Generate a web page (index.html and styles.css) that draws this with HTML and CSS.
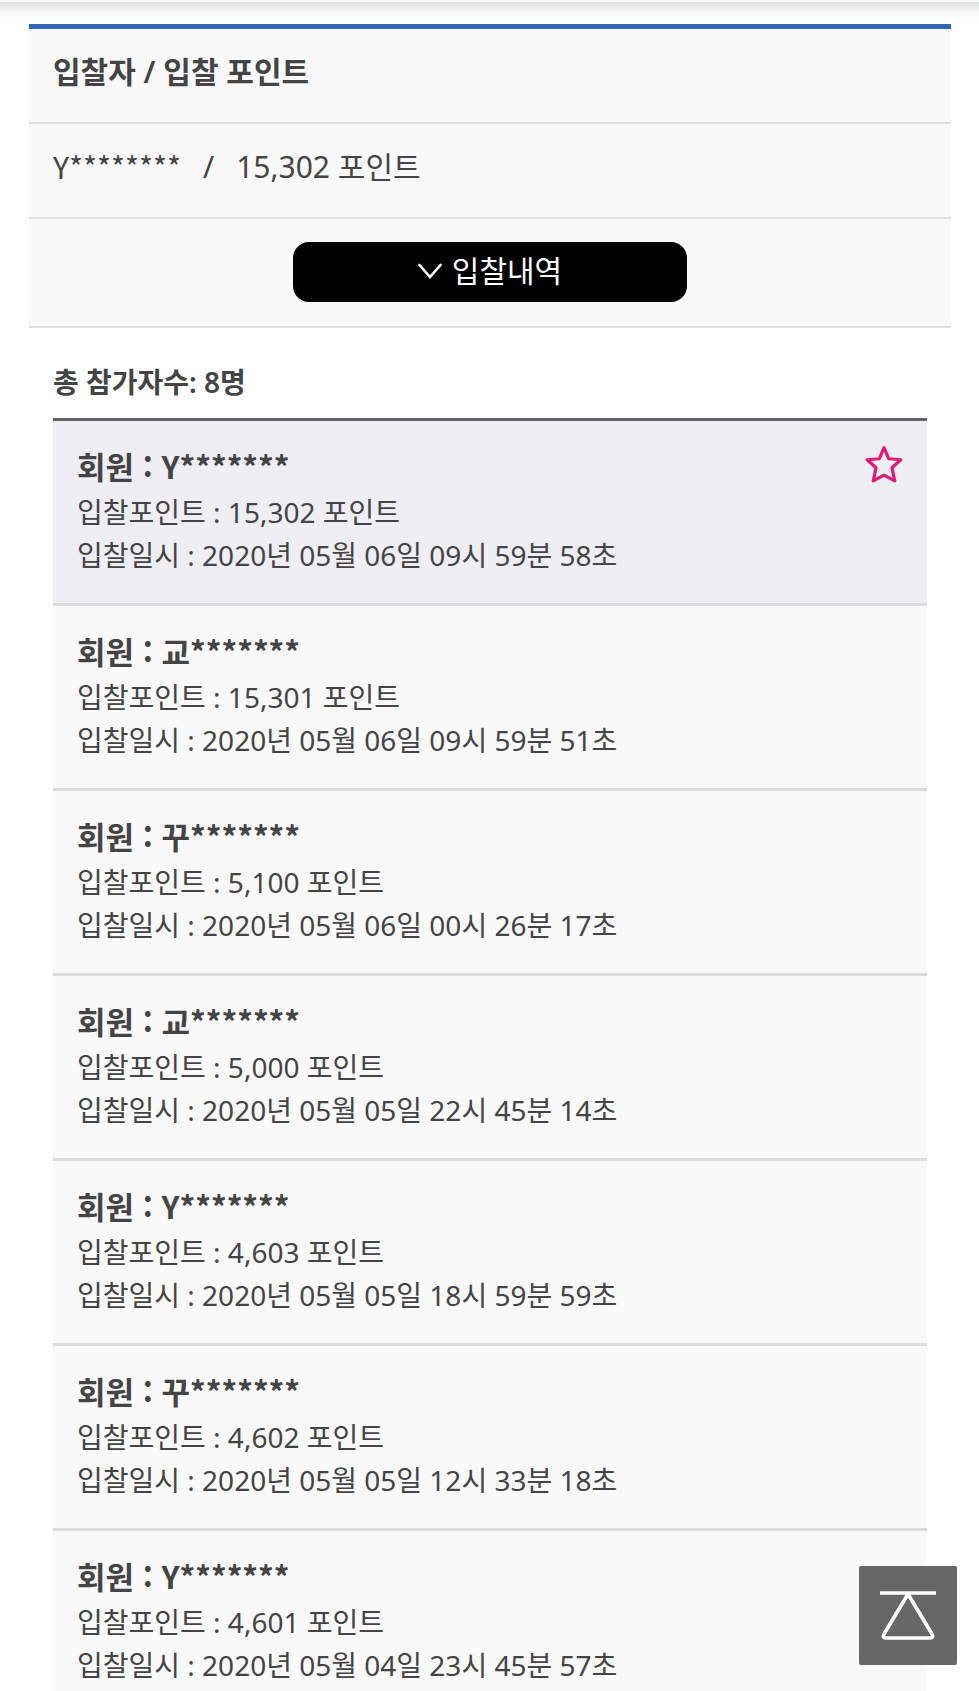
FILE: index.html
```html
<!DOCTYPE html>
<html lang="ko">
<head>
    <meta charset="UTF-8">
    <meta name="viewport" content="width=device-width, initial-scale=1.0">
    <title>입찰내역</title>
    <link rel="stylesheet" href="styles.css">
</head>
<body>

<div class="top-shadow"></div>

<main class="page">
    <!-- Winning bid -->
    <section class="summary">
        <h2 class="summary-row summary-title">입찰자 / 입찰 포인트</h2>
        <p class="summary-row summary-bid"><span class="bidder">Y********</span><span>/</span><span>15,302 포인트</span></p>
        <div class="summary-action">
            <button type="button" class="history-button">
                <svg class="chevron" viewBox="0 0 24 20" aria-hidden="true"><path d="M1.5 6 L12 18 L22.5 6"/></svg>
                <span>입찰내역</span>
            </button>
        </div>
    </section>

    <!-- Bid history -->
    <section class="history">
        <h3 class="history-title">총 참가자수: 8명</h3>
        <ul class="bid-list">
            <li class="bid winner">
                <div class="bid-info">
                    <strong class="member">회원 : Y*******</strong>
                    <p>입찰포인트 : 15,302 포인트</p>
                    <p>입찰일시 : 2020년 05월 06일 09시 59분 58초</p>
                </div>
                <svg class="star" viewBox="0 0 36 36" aria-hidden="true"><path d="M18 2.5 L22.4 13 L34 14 L25.5 21.5 L28.2 34 L18 28.5 L7.8 34 L10.5 21.5 L2 14 L13.6 13 Z"/></svg>
            </li>
            <li class="bid">
                <div class="bid-info">
                    <strong class="member">회원 : 교*******</strong>
                    <p>입찰포인트 : 15,301 포인트</p>
                    <p>입찰일시 : 2020년 05월 06일 09시 59분 51초</p>
                </div>
            </li>
            <li class="bid">
                <div class="bid-info">
                    <strong class="member">회원 : 꾸*******</strong>
                    <p>입찰포인트 : 5,100 포인트</p>
                    <p>입찰일시 : 2020년 05월 06일 00시 26분 17초</p>
                </div>
            </li>
            <li class="bid">
                <div class="bid-info">
                    <strong class="member">회원 : 교*******</strong>
                    <p>입찰포인트 : 5,000 포인트</p>
                    <p>입찰일시 : 2020년 05월 05일 22시 45분 14초</p>
                </div>
            </li>
            <li class="bid">
                <div class="bid-info">
                    <strong class="member">회원 : Y*******</strong>
                    <p>입찰포인트 : 4,603 포인트</p>
                    <p>입찰일시 : 2020년 05월 05일 18시 59분 59초</p>
                </div>
            </li>
            <li class="bid">
                <div class="bid-info">
                    <strong class="member">회원 : 꾸*******</strong>
                    <p>입찰포인트 : 4,602 포인트</p>
                    <p>입찰일시 : 2020년 05월 05일 12시 33분 18초</p>
                </div>
            </li>
            <li class="bid">
                <div class="bid-info">
                    <strong class="member">회원 : Y*******</strong>
                    <p>입찰포인트 : 4,601 포인트</p>
                    <p>입찰일시 : 2020년 05월 04일 23시 45분 57초</p>
                </div>
            </li>
        </ul>
    </section>
</main>

<button type="button" class="to-top" aria-label="맨 위로" onclick="window.scrollTo(0, 0)">
    <svg viewBox="0 0 60 52" aria-hidden="true"><path d="M2 3 H58 M30 4 L6 44 Q4 48 8 48 H52 Q56 48 54 44 Z"/></svg>
</button>

</body>
</html>
```

FILE: styles.css
```css
* {
    box-sizing: border-box;
}

body {
    margin: 0;
    background-color: #fefefe;
    color: #444;
    font-family: "Noto Sans", "Noto Sans CJK KR", sans-serif;
    font-size: 28px;
    line-height: 43px;
}

h2,
h3,
p,
ul {
    margin: 0;
    padding: 0;
}

.top-shadow {
    height: 24px;
    background: linear-gradient(#fafafa 2px, #dcdede 2px, #e4e5e5 5px, #f8f8f8 12px, #fefefe 20px);
}

.page {
    padding: 0 28px 0 29px;
}

/* Summary panel */
.summary {
    background-color: #f9f9f9;
    border-top: 5px solid #2e65b8;
}

.summary-row {
    padding: 20px 24px 28px;
    border-bottom: 2px solid #e0e0e0;
    font-size: 30px;
    line-height: 45px;
}

.summary-title {
    font-weight: 600;
}

.summary-bid {
    display: flex;
    gap: 22px;
}

.bidder,
.member {
    font-family: "Noto Sans CJK KR", sans-serif;
}

.summary-action {
    display: flex;
    justify-content: center;
    padding: 23px 0 24px;
    border-bottom: 2px solid #e0e0e0;
}

.history-button {
    display: flex;
    align-items: center;
    justify-content: center;
    gap: 10px;
    width: 394px;
    height: 60px;
    padding: 0 0 6px;
    border: none;
    border-radius: 16px;
    background-color: #000;
    color: #fff;
    font-family: inherit;
    font-size: 30px;
    cursor: pointer;
}

.chevron {
    width: 24px;
    height: 20px;
    fill: none;
    stroke: #fff;
    stroke-width: 2.6;
    stroke-linecap: round;
}

/* Bid list */
.history {
    padding: 33px 24px 0;
}

.history-title {
    padding-bottom: 14px;
    border-bottom: 3px solid #666;
    font-size: 28px;
    font-weight: 600;
}

.bid-list {
    list-style: none;
}

.bid {
    display: flex;
    justify-content: space-between;
    padding: 20px 24px 26px;
    border-bottom: 3px solid #dcdcdc;
    background-color: #f9f9f9;
}

.bid.winner {
    background-color: #efeef4;
}

.member {
    display: block;
    font-size: 31px;
    font-weight: 600;
    line-height: 50px;
}

.star {
    width: 38px;
    height: 38px;
    margin-top: 4px;
    fill: none;
    stroke: #e01b74;
    stroke-width: 3;
    stroke-linejoin: round;
}

/* Back to top button */
.to-top {
    position: fixed;
    right: 22px;
    bottom: 26px;
    display: flex;
    align-items: center;
    justify-content: center;
    width: 98px;
    height: 99px;
    padding: 0;
    border: none;
    border-radius: 2px;
    background-color: rgba(90, 90, 90, 0.92);
    cursor: pointer;
}

.to-top svg {
    width: 60px;
    height: 52px;
    fill: none;
    stroke: #fff;
    stroke-width: 3.6;
    stroke-linejoin: round;
}
```
